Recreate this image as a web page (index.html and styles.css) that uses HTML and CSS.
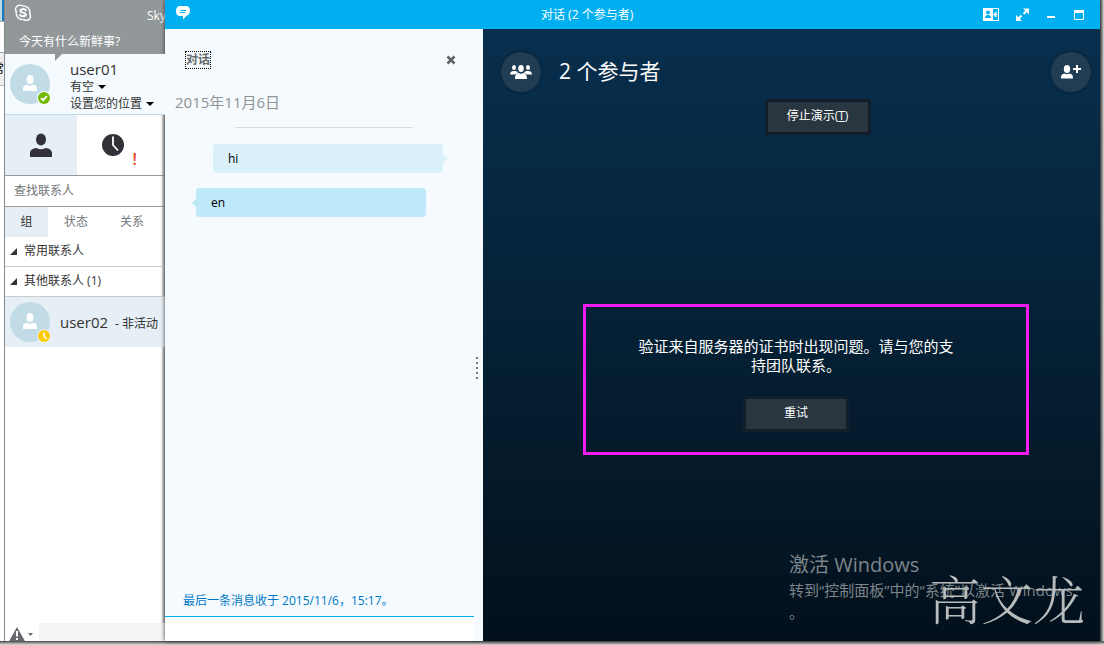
FILE: index.html
```html
<!DOCTYPE html>
<html lang="zh-CN">
<head>
<meta charset="utf-8">
<title>对话 (2 个参与者)</title>
<link rel="stylesheet" href="styles.css">
</head>
<body>
<div class="desktop">
  <div class="behind" aria-hidden="true">
    <div class="behind-top"></div>
    <div class="behind-mid"></div>
    <div class="behind-tab">常</div>
  </div>

  <aside class="contacts">
    <header class="brand">
      <div class="brand-row">
        <svg class="skype" viewBox="0 0 18 18" width="18" height="18" fill="none" stroke="#fff">
          <path stroke-width="1.4" d="M5.5 1.3C7 .8 8 1.2 9 1.9c4 0 7 2.800 7 6.500 0 .8 0 1.100-.2 1.800 1.600 2.500.2 6-3 6.200-1.100 0-1.900-.3-2.600-.8C5.500 16 2 13 2.100 8.900c0-.8.1-1.300.2-1.800C.4 5 2.200 1.600 5.500 1.300z"/>
          <path stroke-width="2" stroke-linecap="round" d="M11.800 6.300C11 4.700 6.400 4.600 6.400 6.800c0 2.400 5.400 1.200 5.400 3.800 0 2.200-4.700 2.300-5.700.4"/>
        </svg>
        <span class="brand-name">Skype for Business</span>
      </div>
      <div class="mood">今天有什么新鲜事?</div>
    </header>

    <section class="me">
      <div class="avatar">
        <svg viewBox="0 0 40 40" width="40" height="40"><circle cx="20" cy="20" r="20" fill="#c1dce7"/><ellipse cx="20" cy="15.500" rx="3.500" ry="4.500" fill="#fff"/><path d="M13 27v-2.500c0-2.500 2-3.700 4-3.700 2 1.200 4 1.200 6 0 2 0 4 1.200 4 3.700V27z" fill="#fff"/></svg>
        <svg class="badge" viewBox="0 0 14 14" width="14" height="14"><circle cx="7" cy="7" r="7" fill="#fff"/><circle cx="7" cy="7" r="6" fill="#72b900"/><path d="M4 7.200l2.200 2L10 5" fill="none" stroke="#fff" stroke-width="1.800"/></svg>
      </div>
      <div class="me-info">
        <div class="name">user01</div>
        <button class="drop">有空<span class="caret"></span></button>
        <button class="drop">设置您的位置<span class="caret"></span></button>
      </div>
    </section>

    <nav class="views">
      <button class="view view-on" aria-label="联系人">
        <svg viewBox="0 0 22 24" width="22" height="24" fill="#303238"><ellipse cx="11" cy="6.500" rx="5" ry="6"/><path d="M0 24v-3.500c0-3.500 2.500-5 6.500-5.500 3 1.700 6 1.700 9 0 4 .5 6.500 2 6.500 5.500V24z"/></svg>
      </button>
      <button class="view" aria-label="对话">
        <svg viewBox="0 0 22 24" width="22" height="24"><circle cx="11" cy="12" r="11" fill="#303238"/><path d="M11 3.500V12l5 5.500" fill="none" stroke="#fff" stroke-width="1.800"/></svg>
        <span class="alert">!</span>
      </button>
    </nav>

    <input class="search" type="text" placeholder="查找联系人" aria-label="查找联系人">

    <nav class="tabs">
      <button class="tab tab-on">组</button>
      <button class="tab">状态</button>
      <button class="tab">关系</button>
    </nav>

    <button class="group"><span class="twist"></span>常用联系人</button>
    <button class="group"><span class="twist"></span>其他联系人 (1)</button>

    <div class="contact">
      <div class="avatar">
        <svg viewBox="0 0 40 40" width="40" height="40"><circle cx="20" cy="20" r="20" fill="#c1dce7"/><ellipse cx="20" cy="15.500" rx="3.500" ry="4.500" fill="#fff"/><path d="M13 27v-2.500c0-2.500 2-3.700 4-3.700 2 1.200 4 1.200 6 0 2 0 4 1.200 4 3.700V27z" fill="#fff"/></svg>
        <svg class="badge" viewBox="0 0 14 14" width="14" height="14"><circle cx="7" cy="7" r="7" fill="#e6eff5"/><circle cx="7" cy="7" r="6" fill="#fc0"/><path d="M7 3.500V7l2.500 3" fill="none" stroke="#fff" stroke-width="1.500"/></svg>
      </div>
      <span class="name">user02</span>
      <span class="presence">- 非活动</span>
    </div>

    <footer class="status">
      <button class="warn" aria-label="连接状态">
        <svg viewBox="0 0 26 14" width="26" height="14"><path d="M8 0L17 16H-1z" fill="#67686d"/><path d="M8 4v5.500M8 11v2" stroke="#fff" stroke-width="2"/><path d="M19 6h5l-2.500 3z" fill="#67686d"/></svg>
      </button>
      <div class="status-bar"></div>
    </footer>
  </aside>

  <main class="window">
    <header class="titlebar">
      <svg class="bubble" viewBox="0 0 14 14" width="14" height="14"><path d="M4 0h6c2.500 0 4 2 4 4.500C14 7.500 12.500 9 11 9.500L7 13.500V10H4C1.500 10 0 8 0 5.200 0 2 1.500 0 4 0z" fill="#fff"/><path d="M4.500 4.500H10M4 6.500h5" stroke="#00aff0"/></svg>
      <h1 class="title">对话 (2 个参与者)</h1>
      <div class="controls">
        <button class="ctl" aria-label="布局"><svg viewBox="0 0 16 13" width="16" height="13"><path d="M0 0h16v13H0z" fill="#fff"/><circle cx="5" cy="4.500" r="2" fill="#00aff0"/><path d="M2 10c0-2 1-3 3-3s3 1 3 3zM10 1h5v11h-5z" fill="#00aff0"/><path d="M14.500 6.500h-3M13.500 4l-2.500 2.500L13.500 9" fill="none" stroke="#fff" stroke-width="1.300"/></svg></button>
        <button class="ctl" aria-label="全屏"><svg viewBox="0 0 14 14" width="14" height="14"><path d="M7 0.500H13v6zM0 7V13h6z" fill="#fff"/><path d="M7.500 6l3-3M2.500 10.500l3-3" stroke="#fff" stroke-width="2"/></svg></button>
        <button class="ctl" aria-label="最小化"><svg viewBox="0 0 10 10" width="10" height="10"><path d="M0 6h8v2H0z" fill="#fff"/></svg></button>
        <button class="ctl" aria-label="最大化"><svg viewBox="0 0 10 10" width="10" height="10"><path d="M.5.500h9v9h-9z" fill="none" stroke="#fff"/><path d="M0 0h10v3H0z" fill="#fff"/></svg></button>
      </div>
    </header>

    <div class="panes">
      <section class="chat">
        <header class="chat-head">
          <h2 class="chat-title">对话</h2>
          <button class="close" aria-label="关闭"><svg viewBox="0 0 10 10" width="10" height="10"><path d="M1.500 1.500l7 7m0-7l-7 7" stroke="#606469" stroke-width="2.500"/></svg></button>
        </header>
        <div class="date">2015年11月6日</div>
        <hr class="rule">
        <p class="msg msg-out">hi</p>
        <p class="msg msg-in">en</p>
        <div class="last">最后一条消息收于 2015/11/6，15:17。</div>
        <textarea class="compose" aria-label="消息"></textarea>
        <div class="grip"><i></i><i></i><i></i><i></i><i></i></div>
      </section>

      <section class="stage">
        <header class="people">
          <button class="round" aria-label="参与者"><svg viewBox="0 0 22 16" width="22" height="16" fill="#fff"><ellipse cx="4" cy="3.500" rx="2" ry="2.500"/><ellipse cx="18" cy="3.500" rx="2" ry="2.500"/><ellipse cx="11" cy="4.500" rx="2.800" ry="3.500"/><path d="M0 10.500C0 8 1.500 7 4 7s3 .5 4 1.500L5.500 10.500zM22 10.500C22 8 20.500 7 18 7s-3 .5-4 1.500l2.500 2zM5 15c0-4 1.500-5.500 3.500-6 1.500 1 3.500 1 5 0 2 .5 3.500 2 3.500 6z"/></svg></button>
          <h2 class="people-title">2 个参与者</h2>
          <button class="round" aria-label="添加参与者"><svg viewBox="0 0 22 16" width="22" height="16" fill="#fff"><ellipse cx="7" cy="5" rx="3.200" ry="4"/><path d="M1 14.500c0-4 1.500-4.500 3.500-5 1.500 1 3.500 1 5 0 2 .500 3.500 1 3.500 5zM13 4h3V1h2v3h3v2h-3v3h-2V6h-3z"/></svg></button>
        </header>
        <button class="action stop">停止演示(<u>T</u>)</button>
        <div class="notice">
          <p class="notice-text">验证来自服务器的证书时出现问题。请与您的支持团队联系。</p>
          <button class="action">重试</button>
        </div>
        <div class="activate">
          <div class="activate-title">激活 Windows</div>
          <div class="activate-text">转到<q>控制面板</q>中的<q>系统</q>以激活 Windows<br>。</div>
        </div>
        <div class="signature">高文龙</div>
      </section>
    </div>
  </main>
</div>
</body>
</html>
```

FILE: styles.css
```css
* { box-sizing: border-box; }

body {
  margin: 0;
  background: #fff;
  color: #333;
  font: 12px/16px "Open Sans", "Noto Sans CJK SC", sans-serif;
}

button, input, textarea {
  margin: 0;
  padding: 0;
  border: 0;
  border-radius: 0;
  background: none;
  color: inherit;
  font: inherit;
}

h1, h2, p { margin: 0; font-weight: 400; }
svg { display: block; }
q { quotes: "\201C" "\201D"; }
q::before, q::after { font-family: "Open Sans", sans-serif; }

.desktop {
  display: grid;
  grid-template-columns: 4px 161px minmax(0, 1fr);
  height: 100vh;
  padding: 0 4px 4px 0;
  background: linear-gradient(#444, #999 50%, #ddd) bottom / 100% 4px no-repeat,
    linear-gradient(90deg, #444, #999 50%, #ddd) right / 4px 100% no-repeat, #fff;
}

/* Sliver of the window underneath */
.behind { overflow: hidden; background: #fff; }
.behind-top { height: 21px; border-right: 2px solid #1979c0; background: #bcd8e4; }
.behind-mid { height: 32px; border-top: 1px solid #aaa; border-bottom: 1px solid #9ab; background: #fff; }
.behind-tab {
  display: flex;
  align-items: center;
  justify-content: flex-end;
  height: 33px;
  border-bottom: 1px solid #bbb;
  background: #eee;
  color: #000;
}

/* Contact list window */
.contacts {
  display: flex;
  flex-direction: column;
  overflow: hidden;
  border-left: 1px solid #888;
  background: linear-gradient(270deg, #999, #fff 4px);
}

.brand {
  height: 54px;
  padding: 4px 0 0 9px;
  background: #92979a;
  color: #fff;
}
.brand-row { display: flex; gap: 115px; height: 30px; white-space: nowrap; }
.skype { flex: none; }
.brand-name { padding-top: 4px; }
.mood { padding-left: 5px; }

.me {
  position: relative;
  display: flex;
  gap: 20px;
  height: 61px;
  padding: 6px 0 0 5px;
  border-bottom: 1px solid #b9dced;
  background: #f4fafd;
}
.me::before {
  content: "";
  position: absolute;
  top: 0;
  left: 50px;
  border-top: 7px solid #92979a;
  border-right: 7px solid transparent;
}
.avatar { position: relative; flex: none; }
.me .avatar { align-self: flex-start; padding-top: 4px; }
.badge { position: absolute; right: -1px; bottom: -1px; }
.name { font-size: 15px; line-height: 18px; }
.drop { display: flex; align-items: center; gap: 4px; height: 17px; white-space: nowrap; }
.caret { border: 4px solid transparent; border-top-color: #000; border-bottom: 0; }

.views { display: flex; height: 61px; border-bottom: 1px solid #999; }
.view {
  position: relative;
  display: flex;
  align-items: center;
  justify-content: center;
  flex: 0 0 72px;
}
.view-on { background: #e6eff5; }
.alert { position: absolute; right: 12px; bottom: 7px; color: #e04020; font-size: 16px; font-weight: 600; line-height: 18px; }

.search { width: 100%; height: 31px; padding: 0 0 1px 9px; border-bottom: 1px solid #999; }
.search::placeholder { color: #707477; opacity: 1; }

.tabs { display: flex; height: 30px; }
.tab { flex: 0 0 56px; color: #73777a; }
.tab-on { flex-basis: 43px; background: #e6eff5; color: #333; }

.group {
  display: flex;
  align-items: center;
  gap: 7px;
  height: 30px;
  padding: 0 0 1px 5px;
  border-bottom: 1px solid #ccc;
  white-space: nowrap;
}
.twist { border-bottom: 7px solid #333; border-left: 7px solid transparent; }

.contact {
  display: flex;
  align-items: center;
  height: 50px;
  padding-left: 5px;
  background: #e6eff5;
  white-space: nowrap;
}
.contact .name { margin: 0 7px 0 10px; }
.presence { padding-top: 3px; }

.status { display: flex; align-items: flex-end; height: 18px; margin-top: auto; }
.warn { width: 34px; padding-left: 4px; }
.status-bar { flex: 1; height: 18px; background: #f4f4f4; }

/* Conversation window */
.window { display: flex; flex-direction: column; min-width: 0; box-shadow: 0 0 4px #333; }
.titlebar {
  display: grid;
  grid-template-columns: 365px auto 1fr;
  align-items: center;
  height: 29px;
  padding: 0 16px 0 11px;
  background: #00aff0;
  color: #fff;
}
.title { font-size: 12px; line-height: 16px; }
.bubble { margin-bottom: 3px; }
.controls { display: flex; align-items: center; justify-content: flex-end; gap: 17px; }

.panes { display: grid; grid-template-columns: 318px minmax(0, 1fr); flex: 1; min-height: 0; }

.chat { position: relative; display: flex; flex-direction: column; background: #f4fafd; }
.chat-head { display: flex; align-items: center; justify-content: space-between; padding: 22px 27px 0 20px; }
.chat-title { border: 1px dotted #000; color: #666a6e; font-size: 12px; font-weight: 700; }
.date { padding: 23px 10px 0; color: #8f9498; font-size: 15px; line-height: 20px; }
.rule { width: 178px; margin: 15px 0 16px 70px; border: 0; border-top: 1px solid #d9dddf; }
.msg {
  position: relative;
  width: 230px;
  padding: 7px 15px 6px;
  border-radius: 4px;
  color: #000;
}
.msg::after { content: ""; position: absolute; top: 11px; border: 4px solid transparent; }
.msg-out { margin-left: 48px; background: #daf1fa; }
.msg-out::after { left: 100%; border-left-color: #daf1fa; border-right: 0; }
.msg-in { margin: 15px 0 0 31px; background: #bfe8f8; }
.msg-in::after { right: 100%; border-right-color: #bfe8f8; border-left: 0; }
.last { margin-top: auto; padding: 0 18px 7px; color: #0078c8; }
.compose { width: calc(100% - 9px); height: 25px; border-top: 1px solid #00aff0; background: #fff; resize: none; }
.grip { position: absolute; top: 328px; right: 5px; display: grid; gap: 3px; }
.grip i { width: 2px; height: 2px; background: #73777a; }

.stage {
  position: relative;
  display: flex;
  flex-direction: column;
  background: linear-gradient(#082f4e, #052237 45%, #03101c);
  color: #fff;
}
.people { display: flex; align-items: center; padding: 23px 9px 0 18px; }
.people-title { flex: 1; padding: 0 0 2px 18px; font-size: 21px; line-height: 28px; }
.round {
  display: flex;
  align-items: center;
  justify-content: center;
  width: 40px;
  height: 40px;
  border-radius: 50%;
  background: #213d53;
  box-shadow: 0 0 0 2px #082842;
}
.action { width: 106px; height: 36px; padding-bottom: 2px; border: 3px solid #121e29; background: #293640; }
.stop { align-self: center; margin: 7px 0 0 52px; }

.notice {
  margin: 169px 71px 0 100px;
  padding: 30px 20px 20px 0;
  border: 3px solid #f21bf2;
  text-align: center;
}
.notice-text { max-width: 316px; margin: 0 auto 21px; font-size: 15px; line-height: 19px; }
.notice .action { display: block; margin: 0 auto; }

.activate { position: absolute; right: 16px; bottom: 18px; width: 295px; color: #7d858a; white-space: nowrap; }
.activate-title { font-size: 20px; line-height: 28px; }
.activate-text { font-size: 15px; line-height: 22px; }
.signature {
  position: absolute;
  right: 15px;
  bottom: 4px;
  color: #b9bcbd;
  font: 300 52px/68px "Liberation Serif", "Noto Serif CJK SC", "Noto Sans CJK SC", serif;
}
```
